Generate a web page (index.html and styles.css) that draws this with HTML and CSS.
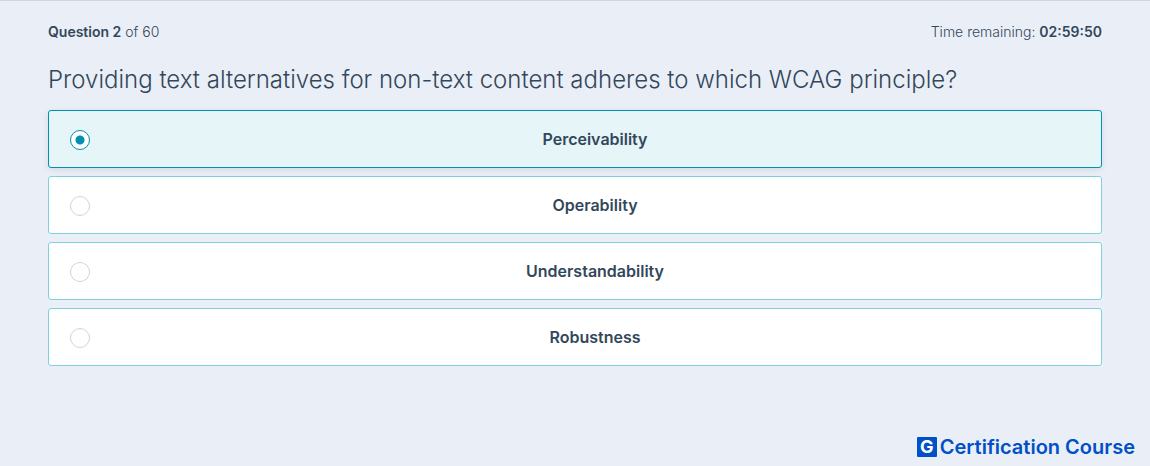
FILE: index.html
```html
<!DOCTYPE html>
<html lang="en">
<head>
<meta charset="utf-8">
<meta name="viewport" content="width=device-width, initial-scale=1">
<title>Certification Course</title>
<link rel="stylesheet" href="styles.css">
</head>
<body>
<main class="quiz">
  <div class="status">
    <p class="progress"><strong>Question 2</strong> of 60</p>
    <p class="timer">Time remaining: <strong>02:59:50</strong></p>
  </div>
  <h1 class="question" id="question">Providing text alternatives for non-text content adheres to which WCAG principle?</h1>
  <form class="options" role="radiogroup" aria-labelledby="question">
    <label class="option"><input class="radio" type="radio" name="answer" checked><span class="answer">Perceivability</span></label>
    <label class="option"><input class="radio" type="radio" name="answer"><span class="answer">Operability</span></label>
    <label class="option"><input class="radio" type="radio" name="answer"><span class="answer">Understandability</span></label>
    <label class="option"><input class="radio" type="radio" name="answer"><span class="answer">Robustness</span></label>
  </form>
</main>
<footer class="brand">
  <span class="mark">G</span>
  <span class="name">Certification Course</span>
</footer>
</body>
</html>
```

FILE: styles.css
```css
* { box-sizing: border-box; }
body {
  margin: 0;
  min-height: 100vh;
  display: flex;
  flex-direction: column;
  justify-content: space-between;
  border-top: 1px solid #cbd6e2;
  background: #eaeff7;
  color: #33475b;
  font-family: Inter, "Open Sans", sans-serif;
}
.quiz { padding: 19px 48px 0; }
.status {
  display: flex;
  justify-content: space-between;
  font-size: 14px;
  line-height: 24px;
  font-weight: 300;
}
.status p { margin: 0; }
.status strong { font-weight: 600; }
.question {
  margin: 18px 0 12px;
  font-size: 24px;
  line-height: 36px;
  font-weight: 300;
}
.options {
  display: flex;
  flex-direction: column;
  gap: 8px;
}
.option {
  display: flex;
  align-items: center;
  gap: 20px;
  padding: 16px 21px;
  border: 1px solid #7fd1de;
  border-radius: 3px;
  background: #fff;
  font-size: 16px;
  line-height: 24px;
  font-weight: 600;
  cursor: pointer;
}
.option:has(.radio:checked) {
  border-color: #0091ae;
  background: #e5f5f8;
  box-shadow: 0 2px 6px rgba(45, 62, 80, 0.12);
}
.radio {
  appearance: none;
  flex: none;
  width: 20px;
  height: 20px;
  margin: 2px 0 0;
  border: 1px solid #cbd6e2;
  border-radius: 50%;
  background: #fff;
}
.radio:checked {
  border-color: #0091ae;
  background: radial-gradient(circle, #0091ae 0 4px, #fff 5px);
}
.answer {
  flex: 1;
  padding: 16px 0;
  margin: -16px 0;
  text-align: center;
}
.brand {
  display: flex;
  align-items: center;
  justify-content: flex-end;
  gap: 3px;
  padding: 0 15px 8px;
  color: #0050c8;
  font-size: 20px;
  line-height: 22px;
  font-weight: 600;
}
.mark {
  width: 20px;
  height: 20px;
  border-radius: 1px;
  background: #0050c8;
  color: #fff;
  font-size: 18px;
  line-height: 20px;
  font-weight: 700;
  text-align: center;
}
```
